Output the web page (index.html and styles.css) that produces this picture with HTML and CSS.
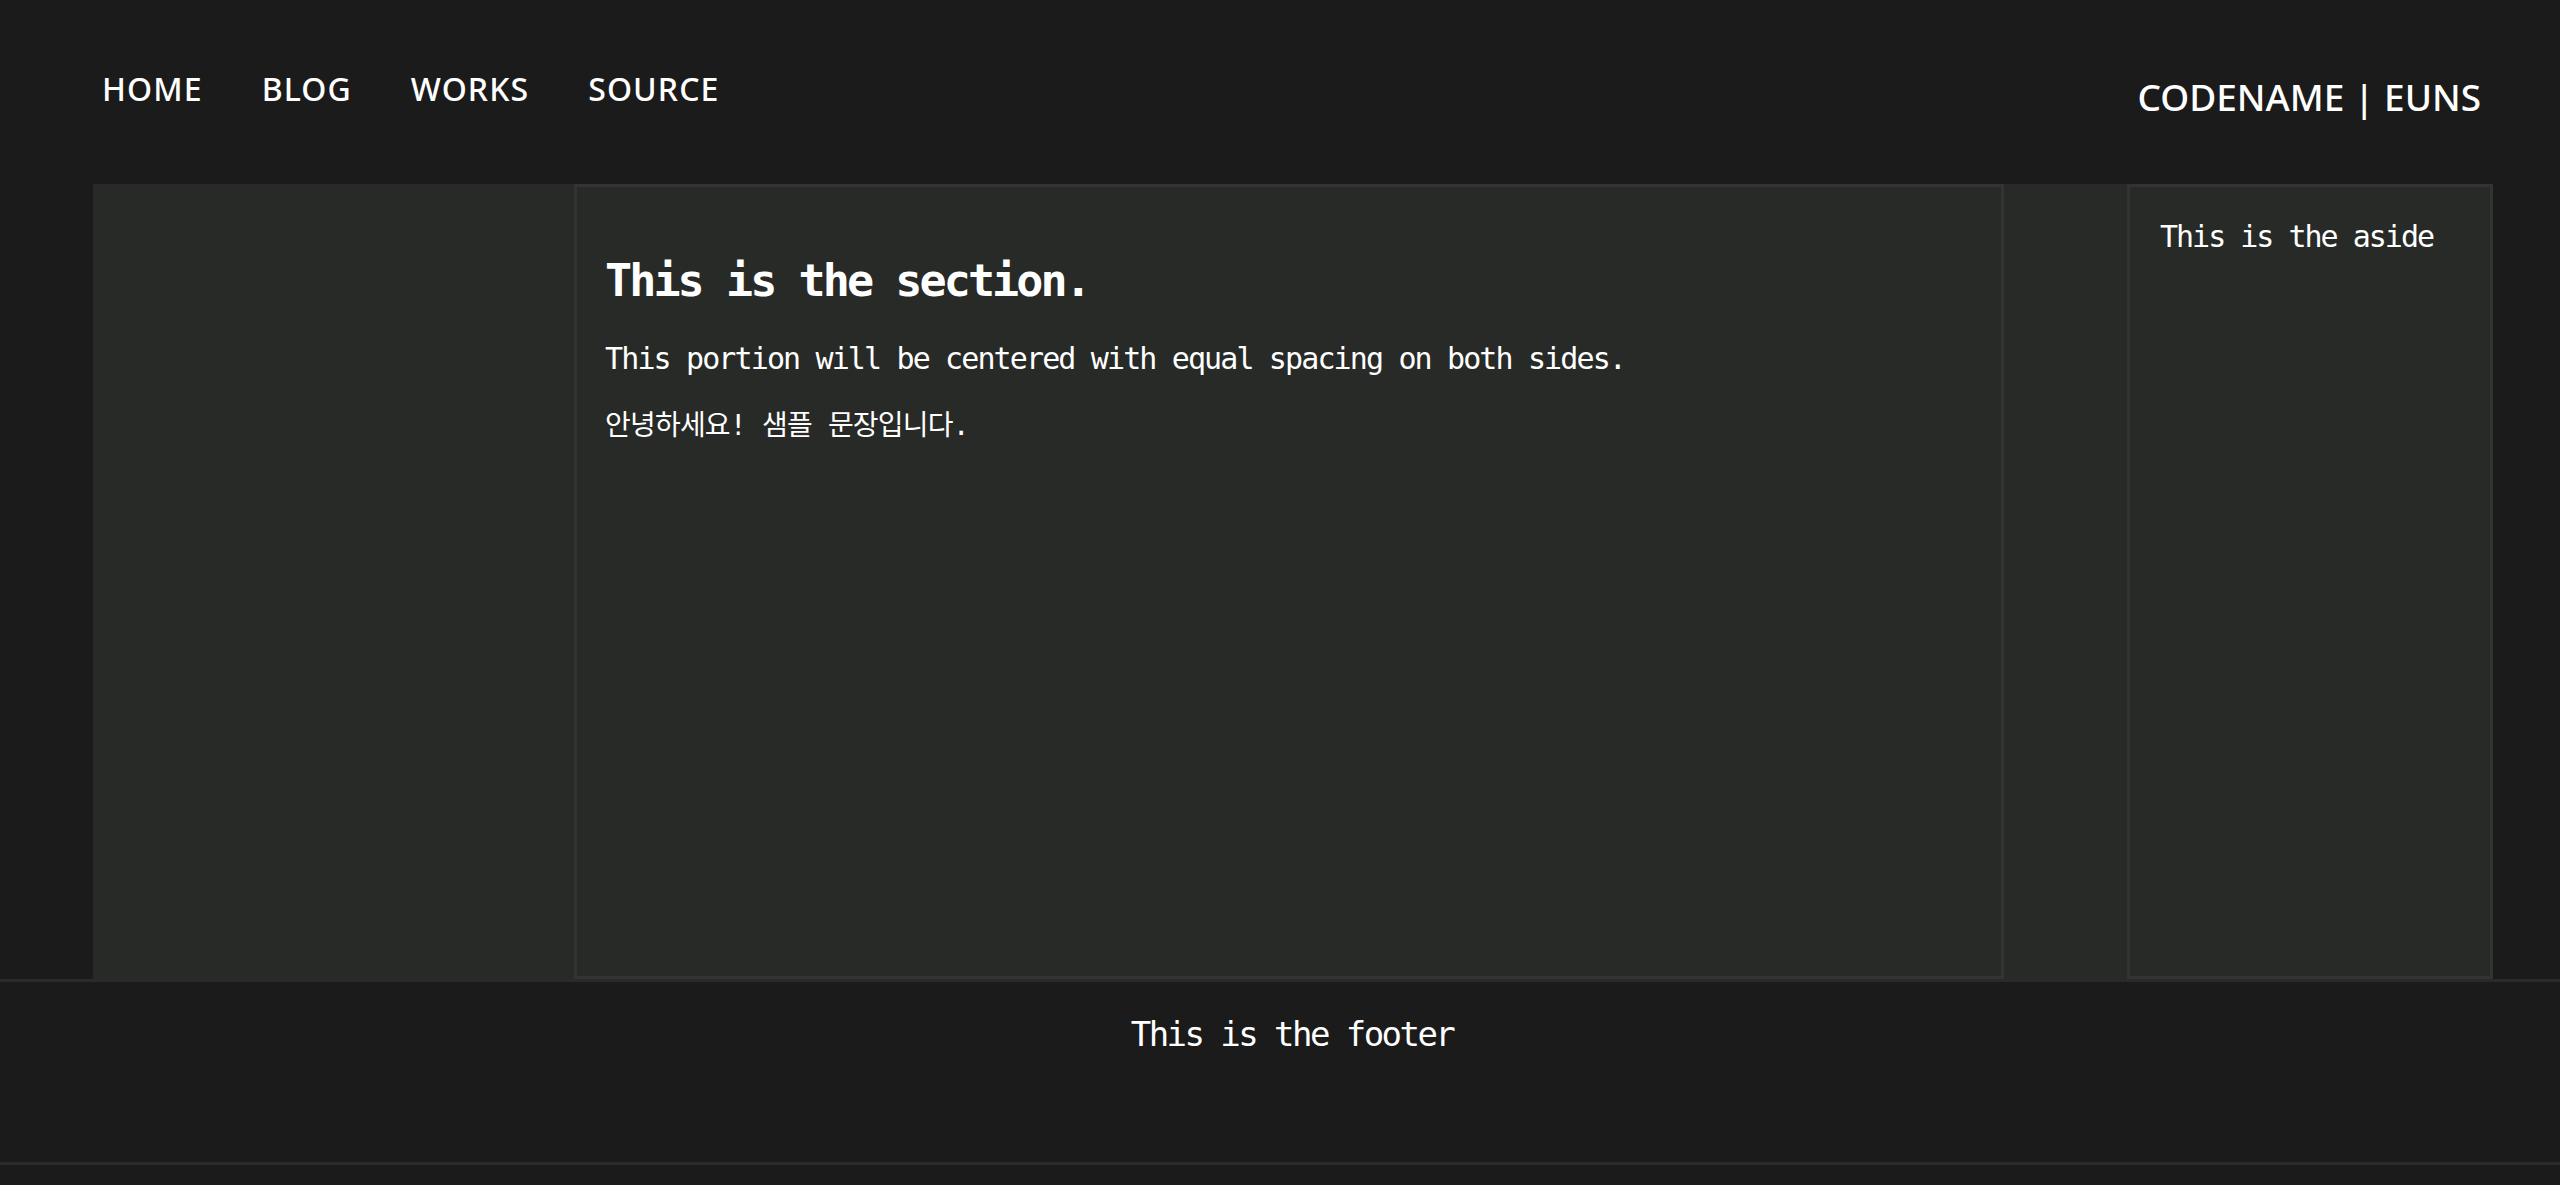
FILE: index.html
```html
<!DOCTYPE html>
<html lang="ko">
<head>
<meta charset="utf-8">
<title>CODENAME | EUNS</title>
<link rel="stylesheet" href="styles.css">
</head>
<body>
<header class="site-header">
  <nav class="nav">
    <a class="nav-link" href="#">HOME</a>
    <a class="nav-link" href="#">BLOG</a>
    <a class="nav-link" href="#">WORKS</a>
    <a class="nav-link" href="#">SOURCE</a>
  </nav>
  <div class="logo">CODENAME | EUNS</div>
</header>
<main class="layout">
  <section class="section">
    <h1 class="section-title">This is the section.</h1>
    <p class="section-text">This portion will be centered with equal spacing on both sides.</p>
    <p class="section-text korean">안녕하세요! 샘플 문장입니다.</p>
  </section>
  <aside class="aside">
    <p class="aside-text">This is the aside</p>
  </aside>
</main>
<footer class="site-footer">
  <p class="footer-text">This is the footer</p>
</footer>
<div class="page-end"></div>
</body>
</html>
```
FILE: styles.css
```css
html, body {
  margin: 0;
  padding: 0;
  background: #1b1b1b;
  color: #ffffff;
}

body {
  font-family: "DejaVu Sans Mono", "Noto Sans CJK KR", monospace;
}

.site-header {
  height: 184px;
  display: flex;
  justify-content: space-between;
  align-items: flex-start;
  padding: 0 79px 0 102px;
  box-sizing: border-box;
}

.nav {
  display: flex;
  gap: 59px;
  margin-top: 69px;
}

.nav-link {
  font-family: "Noto Sans", sans-serif;
  font-weight: 500;
  font-size: 32px;
  line-height: 40px;
  letter-spacing: 1.1px;
  color: #ffffff;
  text-decoration: none;
}

.logo {
  font-family: "Noto Sans", sans-serif;
  font-weight: 500;
  font-size: 37px;
  line-height: 48px;
  margin-top: 73px;
  color: #ffffff;
}

.layout {
  margin-left: 93px;
  width: 2400px;
  height: 795px;
  background: #282a27;
  display: grid;
  grid-template-columns: 481px 1430px 123px 366px;
}

.section {
  grid-column: 2;
  border: 3px solid #313432;
  box-sizing: border-box;
  padding: 0 28px;
}

.section-title {
  margin: 67px 0 0;
  font-size: 45px;
  line-height: 54px;
  font-weight: bold;
  letter-spacing: -2.9px;
}

.section-text {
  margin: 33px 0 0;
  font-size: 30px;
  line-height: 36px;
  letter-spacing: -1.87px;
}

.section-text.korean {
  margin-top: 31px;
  font-size: 28px;
  letter-spacing: -0.8px;
}

.aside {
  grid-column: 4;
  border: 3px solid #313432;
  box-sizing: border-box;
  padding: 32px 30px 0;
}

.aside-text {
  margin: 0;
  font-size: 30px;
  line-height: 36px;
  letter-spacing: -2px;
}

.site-footer {
  border-top: 3px solid #2a2a2a;
  border-bottom: 3px solid #2a2a2a;
  height: 186px;
  box-sizing: border-box;
  padding: 32px 0 0 24px;
  text-align: center;
}

.footer-text {
  margin: 0;
  font-size: 34px;
  line-height: 40px;
  letter-spacing: -2.55px;
}

.page-end {
  height: 40px;
}
```
